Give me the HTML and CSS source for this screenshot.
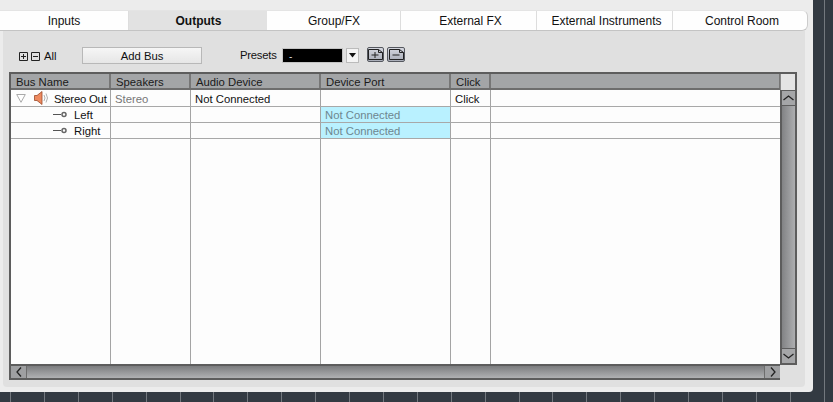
FILE: index.html
```html
<!DOCTYPE html>
<html>
<head>
<meta charset="utf-8">
<title>VST Connections</title>
<link rel="stylesheet" href="styles.css">
</head>
<body>
<div class="desk">
  <div class="window">
    <nav class="tabs">
      <div class="tab t1">Inputs</div>
      <div class="tab t2 active">Outputs</div>
      <div class="tab t3">Group/FX</div>
      <div class="tab t4 nudge">External FX</div>
      <div class="tab t4 nudge">External Instruments</div>
      <div class="tab last nudge">Control Room</div>
    </nav>
    <div class="panel">
      <div class="toolbar">
        <svg class="tog plus" width="9" height="9" viewBox="0 0 9 9"><path d="M.5.5h8v8H.5zM2 4.500h5M4.500 2v5" fill="none" stroke="#222"/></svg>
        <svg class="tog minus" width="9" height="9" viewBox="0 0 9 9"><path d="M.5.5h8v8H.5zM2 4.500h5" fill="none" stroke="#222"/></svg>
        <span class="all">All</span>
        <button class="add">Add Bus</button>
        <span class="presets">Presets</span>
        <div class="preset-box">-</div>
        <div class="preset-arrow"><svg width="9" height="5" viewBox="0 0 9 5"><path d="M1 0h7L4.500 4.500z" fill="#111"/></svg></div>
        <div class="icon-btn first"><svg width="15" height="11" viewBox="0 0 15 11"><path d="M.5.500h10l4 3v7H.5zM10.500.5v3h4M3.500 6h7M7 3v6" fill="none" stroke="#222"/></svg></div>
        <div class="icon-btn second"><svg width="15" height="11" viewBox="0 0 15 11"><path d="M.5.500h10l4 3v7H.5zM10.500.5v3h4M3.500 6h7" fill="none" stroke="#222"/></svg></div>
      </div>
      <div class="grid">
        <div class="main">
          <div class="row head">
            <div class="c c1">Bus Name</div><div class="c c2">Speakers</div><div class="c c3">Audio Device</div><div class="c c4">Device Port</div><div class="c c5">Click</div><div class="c c6"></div>
          </div>
          <div class="body">
            <div class="row top">
              <div class="c c1 bus">
                <svg class="tri" width="10" height="9" viewBox="0 0 10 9"><path d="M.7.500h8.600L5 8.300z" fill="#fff" stroke="#aaa"/></svg>
                <svg class="spk" width="15" height="14" viewBox="0 0 15 14"><path d="M.5 4.500h2.500l5-4v13l-5-4H.5z" fill="#ee8a60" stroke="#9b4a2a" stroke-width=".8"/><path d="M10 4q2 3 0 6M12 2.500q3 4.500 0 9" fill="none" stroke="#b0b0b0"/></svg>
                <span class="bus-name">Stereo Out</span>
              </div>
              <div class="c c2 muted">Stereo</div><div class="c c3">Not Connected</div><div class="c c4"></div><div class="c c5">Click</div><div class="c c6"></div>
            </div>
            <div class="row">
              <div class="c c1 sub"><svg width="15" height="7" viewBox="0 0 15 7"><path d="M0 3.500h8" stroke="#555"/><circle cx="11" cy="3.500" r="2" fill="none" stroke="#666" stroke-width="1.500"/></svg><span>Left</span></div>
              <div class="c c2"></div><div class="c c3"></div><div class="c c4 port">Not Connected</div><div class="c c5"></div><div class="c c6"></div>
            </div>
            <div class="row">
              <div class="c c1 sub"><svg width="15" height="7" viewBox="0 0 15 7"><path d="M0 3.500h8" stroke="#555"/><circle cx="11" cy="3.500" r="2" fill="none" stroke="#666" stroke-width="1.500"/></svg><span>Right</span></div>
              <div class="c c2"></div><div class="c c3"></div><div class="c c4 port">Not Connected</div><div class="c c5"></div><div class="c c6"></div>
            </div>
            <div class="row fill">
              <div class="c c1"></div><div class="c c2"></div><div class="c c3"></div><div class="c c4"></div><div class="c c5"></div><div class="c c6"></div>
            </div>
          </div>
          <div class="hscroll">
            <div class="arrow-h"><svg width="6" height="10" viewBox="0 0 6 10"><path d="M5 .5L1 5l4 4.500" fill="none" stroke="#222" stroke-width="1.300"/></svg></div>
            <div class="track-h"></div>
            <div class="arrow-h"><svg width="6" height="10" viewBox="0 0 6 10"><path d="M1 .5L5 5 1 9.500" fill="none" stroke="#222" stroke-width="1.300"/></svg></div>
          </div>
        </div>
        <div class="side">
          <div class="side-bar">
            <div class="corner"></div>
            <div class="arrow-v"><svg width="11" height="6" viewBox="0 0 11 6"><path d="M.5 5L5.500 1l5 4" fill="none" stroke="#222" stroke-width="1.300"/></svg></div>
            <div class="track-v"></div>
            <div class="arrow-v down"><svg width="11" height="6" viewBox="0 0 11 6"><path d="M.5 1l5 4 5-4" fill="none" stroke="#222" stroke-width="1.300"/></svg></div>
          </div>
        </div>
      </div>
    </div>
  </div>
</div>
</body>
</html>
```
FILE: styles.css
```css
* { box-sizing: border-box; }
html, body { margin: 0; height: 100%; overflow: hidden; }
body { font: 11.300px/14px "Liberation Sans", Arial, sans-serif; color: #111; }
.desk {
  width: 833px; height: 402px;
  background-color: #333a42;
  background-image: repeating-linear-gradient(90deg, #73787e 0 1px, transparent 1px 33.900px);
  background-position: 10px 0;
}
.window {
  width: 813px; height: 392px; background: #ececec;
  border-radius: 0 0 4px 0;
  padding-top: 10px;
}
.tabs {
  display: flex; height: 21px; width: 808px;
  background: #fefefe; border-bottom: 1px solid #c4c4c4;
  border-top: 1px solid #e4e4e4; border-right: 1px solid #ccc;
  border-radius: 0 6px 6px 0;
}
.tab {
  flex: none; text-align: center; font-size: 12px; line-height: 21px;
  border-right: 1px solid #ddd;
}
.t1 { width: 129px; }
.t2 { width: 138px; padding-left: 1px; }
.t3 { width: 134px; padding-left: 1px; }
.t4 { width: 136px; }
.nudge { padding-left: 4px; }
.tab.active { background: #e2e2e2; font-weight: bold; border-right: 0; }
.tab.last { flex: 1; border-right: 0; }
.panel {
  width: 802px; height: 356px; margin-left: 3px; background: #e0e0e0;
  border-radius: 0 0 4px 4px; padding: 16px 0 0 6px;
}
.toolbar { display: flex; align-items: flex-start; height: 25px; }
.tog { flex: none; margin-top: 5px; }
.plus { margin-left: 10px; }
.minus { margin-left: 3px; }
.all { margin: 2px 0 0 4px; width: 38px; }
.add {
  width: 120px; height: 17px; padding: 0; font: 11.300px "Liberation Sans", Arial, sans-serif; color: #111;
  background: linear-gradient(#f6f6f6, #e6e6e6); border: 1px solid #b8b8b8;
}
.presets { margin: 1px 0 0 38px; width: 42px; letter-spacing: -.25px; }
.preset-box {
  width: 61px; height: 15px; margin-top: 1px; background: #000; color: #ddd; padding-left: 6px;
  border: 1px solid #c4c4c4; line-height: 15px; font-size: 10px;
}
.preset-arrow {
  width: 13px; height: 15px; margin: 1px 0 0 3px; background: #f4f4f4; border: 1px solid #bbb;
  display: flex; align-items: center; justify-content: center;
}
.icon-btn {
  height: 15px; background: linear-gradient(#d4d6de, #a9adb8);
  border: 1px solid #55585f; border-radius: 2px;
  display: flex; align-items: center; justify-content: center;
}
.icon-btn.first { width: 17px; margin-left: 8px; }
.icon-btn.second { width: 18px; margin-left: 3px; }
.grid {
  display: flex; width: 788px; height: 308px;
  border-left: 2px solid #5d5d5d;
}
.main { width: 769px; display: flex; flex-direction: column; border-top: 2px solid #5d5d5d; }
.row { display: flex; height: 16px; border-bottom: 1px solid #a8a8a8; }
.row.top { height: 17px; }
.c { flex: none; padding-left: 4px; border-right: 1px solid #a4a4a4; line-height: 17px; white-space: nowrap; }
.c1 { width: 100px; }
.c2 { width: 80px; }
.c3 { width: 130px; }
.c4 { width: 130px; }
.c5 { width: 40px; }
.c6 { flex: 1; border-right: 0; }
.top .c { line-height: 18px; }
.head { flex: none; background: #a3a5a7; border-bottom: 2px solid #6d6d6d; color: #1a1a1a; }
.head .c { border-right: 2px solid #767676; line-height: 17px; padding-left: 5px; }
.head .c6 { border-right: 1px solid #767676; }
.body { flex: 1; display: flex; flex-direction: column; background: #fdfdfd; }
.fill { flex: 1; border-bottom: 0; }
.muted { color: #777; }
.port { background: #b9f1ff; color: #6e8790; }
.top .bus { display: flex; align-items: center; padding-left: 5px; }
.spk { margin-left: 8px; margin-right: 5px; flex: none; }
.bus-name { letter-spacing: -.2px; padding-top: 1px; }
.sub { display: flex; align-items: center; padding-left: 42px; gap: 6px; }
.sub span { padding-top: 2px; }
.hscroll {
  flex: none; height: 16px; display: flex; border-top: 2px solid #5d5d5d; border-bottom: 2px solid #5d5d5d;
}
.arrow-h {
  width: 16px; background: #9fa0a2; display: flex; align-items: center; justify-content: center;
}
.arrow-h:first-child { border-right: 1px solid #6d6d6d; }
.arrow-h:last-child { border-left: 1px solid #6d6d6d; }
.track-h { flex: 1; background: linear-gradient(#7c7d7f, #b0b1b3); }
.side { width: 17px; display: flex; flex-direction: column; }
.side-bar {
  height: 293px; display: flex; flex-direction: column;
  border: 2px solid #5d5d5d; border-width: 2px 2px 0 0;
}
.corner { flex: none; height: 16px; background: #e4e4e4; border-left: 1px solid #8a8a8a; }
.arrow-v {
  flex: none; height: 16px; background: #a5a6a8; border: 1px solid #5d5d5d; border-width: 1px 0 1px 2px;
  display: flex; align-items: center; justify-content: center;
}
.track-v { flex: 1; background: linear-gradient(90deg, #828385, #adaeb0); border-left: 2px solid #5d5d5d; }
.arrow-v.down { height: 17px; border-bottom: 2px solid #5d5d5d; }
```
